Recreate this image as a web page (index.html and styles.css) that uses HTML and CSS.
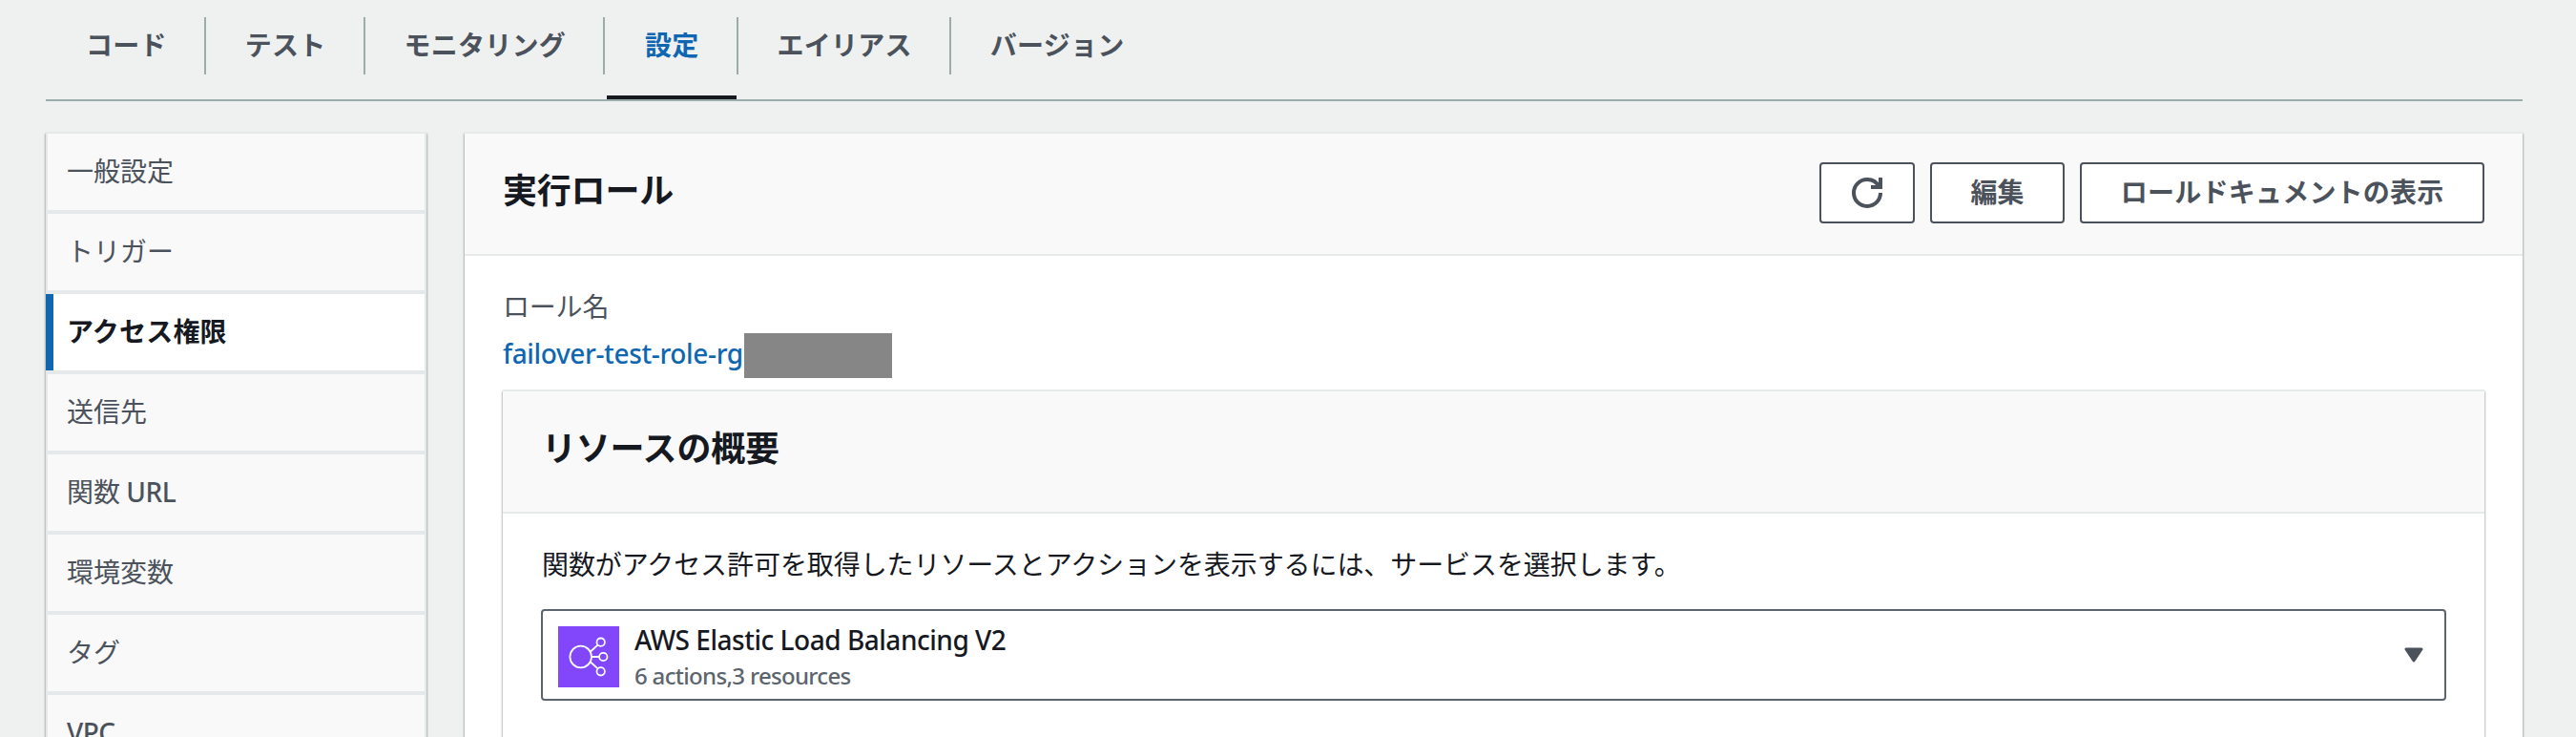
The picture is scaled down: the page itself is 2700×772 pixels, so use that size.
FILE: index.html
```html
<!DOCTYPE html>
<html lang="ja">
<head>
<meta charset="utf-8">
<title>設定 - アクセス権限</title>
<link rel="stylesheet" href="styles.css">
</head>
<body>
<nav class="tabs">
  <a class="tab"><span>コード</span></a>
  <a class="tab"><span>テスト</span></a>
  <a class="tab"><span>モニタリング</span></a>
  <a class="tab tab-active"><span>設定</span></a>
  <a class="tab"><span>エイリアス</span></a>
  <a class="tab"><span>バージョン</span></a>
</nav>
<div class="layout">
  <aside class="side">
    <a class="side-item">一般設定</a>
    <a class="side-item">トリガー</a>
    <a class="side-item side-active">アクセス権限</a>
    <a class="side-item">送信先</a>
    <a class="side-item">関数 <span class="latin">URL</span></a>
    <a class="side-item">環境変数</a>
    <a class="side-item">タグ</a>
    <a class="side-item"><span class="latin">VPC</span></a>
  </aside>
  <main class="card">
    <header class="card-head">
      <h2 class="title">実行ロール</h2>
      <div class="actions">
        <button class="btn btn-icon" aria-label="更新">
          <svg class="refresh" viewBox="0 0 16 16"><path d="M10 5h5V0"/><path d="M15 8a6.957 6.957 0 0 1-7 7 6.957 6.957 0 0 1-7-7 6.957 6.957 0 0 1 7-7 6.87 6.87 0 0 1 6.3 4"/></svg>
        </button>
        <button class="btn">編集</button>
        <button class="btn">ロールドキュメントの表示</button>
      </div>
    </header>
    <div class="card-body">
      <div class="label">ロール名</div>
      <div class="role"><a class="role-link">failover-test-role-rg</a><span class="redacted"></span></div>
      <section class="card inner">
        <header class="card-head"><h2 class="title">リソースの概要</h2></header>
        <div class="inner-body">
          <p class="desc">関数がアクセス許可を取得したリソースとアクションを表示するには、サービスを選択します。</p>
          <div class="select">
            <svg class="service-icon" viewBox="0 0 64 64">
              <rect class="tile" width="64" height="64"/>
              <circle cx="23.700" cy="32" r="11.300"/>
              <circle cx="44.700" cy="16.700" r="4.200"/>
              <circle cx="47.300" cy="32" r="4.200"/>
              <circle cx="44.700" cy="47.300" r="4.200"/>
              <path d="M34 26.500L41.500 19.700M35 32H43M34 37.500L41.500 44.300"/>
            </svg>
            <div class="option">
              <div class="option-name">AWS Elastic Load Balancing V2</div>
              <div class="option-meta">6 actions,3 resources</div>
            </div>
            <svg class="caret" viewBox="0 0 20 16"><path d="M2 2H18L10 14Z"/></svg>
          </div>
        </div>
      </section>
    </div>
  </main>
</div>
</body>
</html>
```
FILE: styles.css
```css
* { box-sizing: border-box; }
html { overflow: hidden; }
body {
  margin: 0;
  height: 772px;
  overflow: hidden;
  padding: 0 56px 0 48px;
  background: #eff1f1;
  color: #16191f;
  font: 28px/44px "Noto Sans CJK JP", "Noto Sans", sans-serif;
}
.tabs {
  display: flex;
  height: 106px;
  padding-top: 18px;
  border-bottom: 2px solid #9bacab;
}
.tab {
  height: 86px;
  color: #4b525b;
  font-weight: 700;
  letter-spacing: .25px;
}
.tab span {
  display: block;
  height: 60px;
  padding: 6px 39px 0 41px;
  border-right: 2px solid #9bacab;
}
.tab:first-child span { padding-left: 42px; }
.tab:last-child span { border-right: 0; }
.tab-active {
  margin-left: 2px;
  color: #0f67b1;
  background: linear-gradient(#16191f, #16191f) 0 82px / calc(100% - 2px) 4px no-repeat;
}
.tab-active span { padding-left: 40px; }
.layout {
  display: flex;
  align-items: flex-start;
  gap: 40px;
  height: 634px;
  margin-top: 32px;
  overflow: clip;
  overflow-clip-margin: 4px;
}
.side {
  flex: none;
  display: flex;
  flex-direction: column;
  gap: 4px;
  width: 399px;
  height: 700px;
  padding: 2px;
  background: #e6e9e9;
  box-shadow: 0 2px 2px rgba(0, 28, 36, .35), 1px 2px 2px rgba(0, 28, 36, .15), -1px 2px 2px rgba(0, 28, 36, .15);
}
.side-item {
  flex: none;
  height: 80px;
  padding: 16px 0 0 20px;
  background: #f9f9f9;
  color: #4b525b;
}
.side-active {
  margin-left: -2px;
  padding-left: 14px;
  border-left: 8px solid #0f67b1;
  background: #fff;
  color: #16191f;
  font-weight: 700;
  letter-spacing: .2px;
}
.latin { font-family: "Noto Sans", sans-serif; font-weight: 500; letter-spacing: -.5px; }
.card {
  flex: 1;
  min-width: 0;
  height: 700px;
  border-top: 2px solid #e6eaea;
  background: #fff;
  box-shadow: 0 2px 2px rgba(0, 28, 36, .35), 1px 2px 2px rgba(0, 28, 36, .15), -1px 2px 2px rgba(0, 28, 36, .15);
}
.card-head {
  display: flex;
  justify-content: space-between;
  height: 128px;
  padding: 30px 40px 0;
  border-bottom: 2px solid #e6eaea;
  background: #f9f9f9;
}
.title {
  margin: -1px 0 0;
  font-size: 36px;
  line-height: 56px;
  font-weight: 700;
  letter-spacing: -.2px;
}
.actions { display: flex; gap: 16px; }
.btn {
  height: 64px;
  padding: 0 40.500px 3px;
  border: 2px solid #4b525b;
  border-radius: 4px;
  background: #fff;
  color: #4b525b;
  font: inherit;
  line-height: 57px;
  font-weight: 700;
  letter-spacing: .22px;
}
.btn-icon { display: flex; align-items: center; justify-content: center; width: 100px; padding: 0; }
.refresh { width: 32px; height: 32px; fill: none; stroke: #4b525b; stroke-width: 2; }
.card-body { padding: 30px 40px 0; }
.label { color: #4b525b; letter-spacing: -.2px; }
.role { display: flex; height: 47px; margin-top: 7px; }
.role-link {
  width: 253px;
  margin-top: -1px;
  color: #0f67b1;
  font-family: "Noto Sans", sans-serif;
  font-weight: 500;
  letter-spacing: -.36px;
  white-space: nowrap;
}
.redacted { width: 155px; background: #868686; }
.inner { height: 500px; margin-top: 12px; }
.inner .card-head { padding-left: 41px; }
.inner-body { padding: 30px 40px 0; }
.desc { margin: 0; padding-left: 1px; letter-spacing: -.08px; }
.select {
  display: flex;
  align-items: center;
  height: 96px;
  margin-top: 26px;
  padding: 0 22px 0 16px;
  border: 2px solid #5c646e;
  border-radius: 4px;
}
.service-icon { width: 64px; height: 64px; margin-top: 3px; fill: none; stroke: #fff; stroke-width: 1.800; }
.tile { fill: #8247fb; stroke: none; }
.option { flex: 1; margin: 1px 0 0 16px; font-family: "Noto Sans", sans-serif; font-weight: 500; white-space: nowrap; }
.option-name { line-height: 42px; letter-spacing: -.48px; }
.option-meta { color: #5c656e; font-size: 24px; line-height: 34px; letter-spacing: -.68px; }
.caret { width: 20px; height: 16px; fill: #4b525b; stroke: #4b525b; stroke-width: 3; stroke-linejoin: round; }
```
